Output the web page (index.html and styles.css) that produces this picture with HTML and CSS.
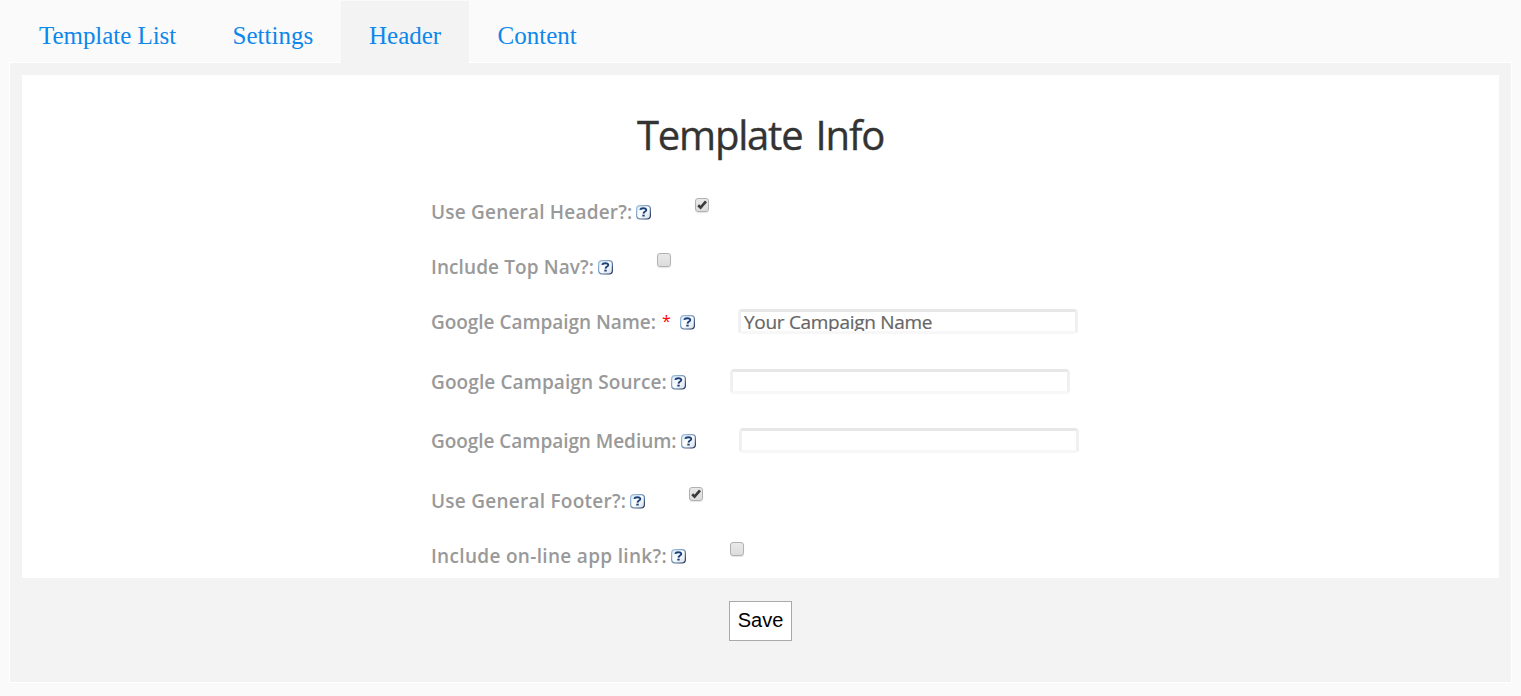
FILE: index.html
```html
<!DOCTYPE html>
<html lang="en">
<head>
<meta charset="utf-8">
<title>Template Info</title>
<link rel="stylesheet" href="styles.css">
</head>
<body>
<svg width="0" height="0" class="defs">
  <defs>
    <linearGradient id="helpFill" x1="0" y1="0" x2="1" y2="1"><stop offset="0" stop-color="#d3e6f6"/><stop offset=".45" stop-color="#fff"/><stop offset="1" stop-color="#cfdcec"/></linearGradient>
    <linearGradient id="helpEdge" x1="0" y1="0" x2="1" y2="1"><stop offset="0" stop-color="#a5c5de"/><stop offset=".5" stop-color="#7393b5"/><stop offset="1" stop-color="#19274a"/></linearGradient>
    <symbol id="help" viewBox="0 0 15 15">
      <rect x=".6" y=".6" width="13.8" height="13.4" rx="3.4" fill="url(#helpFill)" stroke="url(#helpEdge)" stroke-width="1.2"/>
      <path d="M4.3 4.9C4.8 2.7 10.3 2.6 10.3 4.9C10.3 6.7 7.6 6.4 7.5 8.6" fill="none" stroke="#1b4079" stroke-width="1.9"/>
      <path d="M6.3 9.7h2.4v1.8h-2.4z" fill="#1b4079"/>
    </symbol>
    <symbol id="check" viewBox="0 0 14 14"><path d="M3.2 7.2L5.6 9.6L11 3.3" fill="none" stroke="#3b3b3b" stroke-width="2.7"/></symbol>
  </defs>
</svg>
<nav class="tabs">
  <a class="tab tab-list">Template List</a>
  <a class="tab tab-settings">Settings</a>
  <a class="tab tab-header active">Header</a>
  <a class="tab tab-content">Content</a>
</nav>
<main class="panel">
  <section class="sheet">
    <h1>Template Info</h1>
    <form class="fields">
      <div class="row"><label class="use-header">Use General Header?:</label><svg class="help"><use href="#help"/></svg><span class="box"><svg><use href="#check"/></svg></span></div>
      <div class="row"><label class="top-nav">Include Top Nav?:</label><svg class="help"><use href="#help"/></svg><span class="box"></span></div>
      <div class="row text-row"><label class="name">Google Campaign Name:</label><span class="required">*</span><svg class="help"><use href="#help"/></svg><input class="field near" type="text" value="Your Campaign Name"></div>
      <div class="row text-row source-row"><label class="source">Google Campaign Source:</label><svg class="help"><use href="#help"/></svg><input class="field" type="text"></div>
      <div class="row text-row"><label class="medium">Google Campaign Medium:</label><svg class="help"><use href="#help"/></svg><input class="field near" type="text"></div>
      <div class="row"><label class="use-footer">Use General Footer?:</label><svg class="help"><use href="#help"/></svg><span class="box"><svg><use href="#check"/></svg></span></div>
      <div class="row"><label class="app-link">Include on-line app link?:</label><svg class="help"><use href="#help"/></svg><span class="box"></span></div>
    </form>
  </section>
  <button class="save" type="button">Save</button>
</main>
</body>
</html>
```
FILE: styles.css
```css
* { box-sizing: border-box; }
body { margin: 0; height: 696px; overflow: hidden; background: #fafafa; font-family: "Trebuchet MS", "Open Sans", sans-serif; }
.defs { display: block; }
.tabs { display: flex; height: 62px; padding: 1px 0 0 11px; }
.tab { height: 62px; flex: none; padding-left: 28px; font: 25px/69px "Liberation Serif", serif; color: #0d87ea; white-space: nowrap; }
.tab-list { width: 194px; letter-spacing: -.05px; }
.tab-settings { width: 136px; padding-left: 27.6px; }
.tab-header { width: 128px; }
.tab-content { width: 136px; padding-left: 28.6px; }
.active { background: #f3f3f3; position: relative; z-index: 1; }
.panel { margin: 0 9px; height: 621px; border: 1px solid #fff; background: #f3f3f3; padding: 12px 12px 0; display: flex; flex-direction: column; align-items: center; }
.sheet { width: 100%; height: 503px; background: #fff; }
h1 { margin: 0; padding-top: 30px; height: 110px; font-size: 40px; line-height: 60px; font-weight: 400; text-align: center; color: #333; letter-spacing: -1.2px; word-spacing: 4px; -webkit-text-stroke: .35px #333; }
.fields { margin: 0 0 0 409px; }
.row { display: flex; height: 55px; align-items: flex-start; }
.text-row { height: 60px; }
.source-row { height: 59px; }
label { flex: none; font-size: 19px; font-weight: 600; line-height: 54px; color: #999; white-space: nowrap; }
.use-header { width: 205px; letter-spacing: .2px; }
.top-nav { width: 167px; letter-spacing: .1px; }
.name { width: 231px; letter-spacing: -.04px; }
.source { width: 240px; letter-spacing: .1px; }
.medium { width: 250px; letter-spacing: -.05px; }
.use-footer { width: 199px; letter-spacing: .25px; }
.app-link { width: 240px; letter-spacing: .32px; }
.required { width: 18px; flex: none; color: #f00; font-size: 16px; line-height: 52px; }
.help { width: 15px; height: 15px; margin-top: 19.5px; flex: none; }
.box { width: 14px; height: 14px; margin: 13px 0 0 44px; border: 1px solid #b1b1b1; border-radius: 3px; background: linear-gradient(#e9e9e9, #dcdcdc); box-shadow: 0 1px 1px #e4e4e4; }
.box svg { display: block; width: 14px; height: 14px; margin: -1px; }
.field { width: 340px; height: 25px; margin: 14px 0 0 44px; padding: 0 3px; border: 3px solid #f0f0f0; border-top-color: #e7e7e7; border-bottom-color: #f7f7f7; border-radius: 4px; outline: 0; font: 19px/19px "Trebuchet MS", "Open Sans", sans-serif; letter-spacing: -.3px; color: #666; -webkit-text-stroke: .2px #666; background: #fff; }
.near { margin-left: 43px; }
.save { margin-top: 23px; width: 63px; height: 40px; border: 1px solid #a9a9a9; background: #fff; padding: 0 0 2px; font: 20px "Liberation Sans", Arial, sans-serif; color: #000; }
```
